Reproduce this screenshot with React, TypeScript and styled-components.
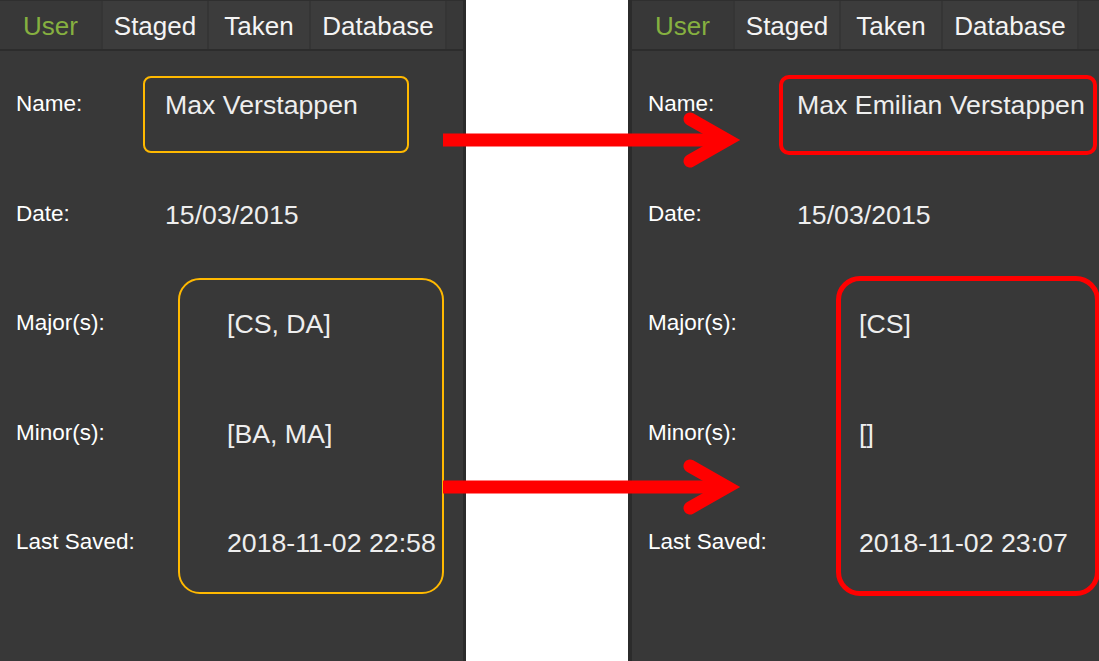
import React from "react";
import styled, { createGlobalStyle } from "styled-components";

const Global = createGlobalStyle`
  html, body { margin: 0; padding: 0; background: #ffffff; }
  body { font-family: "Liberation Sans", Arial, sans-serif; }
`;

const Page = styled.div`
  position: relative;
  width: 1099px;
  height: 661px;
  display: flex;
  justify-content: space-between;
  overflow: hidden;
  background: #ffffff;
`;

const Panel = styled.div<{ $w: number; $side: "left" | "right" }>`
  position: relative;
  width: ${(p) => p.$w}px;
  height: 661px;
  box-sizing: border-box;
  background: #383838;
  display: flex;
  flex-direction: column;
  ${(p) =>
    p.$side === "left"
      ? "border-right: 3px solid #2b2b2b;"
      : "border-left: 4px solid #2b2b2b;"}
`;

const TabBar = styled.div`
  display: flex;
  height: 48px;
  border-top: 1px solid #2f2f2f;
  border-bottom: 2px solid #2c2c2c;
  box-sizing: content-box;
`;

const Tab = styled.div<{ $w: number; $active?: boolean }>`
  width: ${(p) => p.$w}px;
  display: flex;
  align-items: center;
  justify-content: center;
  padding-top: 3px;
  font-size: 26px;
  color: ${(p) => (p.$active ? "#86b040" : "#f4f4f4")};
  background: ${(p) => (p.$active ? "#383838" : "#3c3c3c")};
  border-right: 2px solid #353535;
  box-sizing: border-box;
`;

const Rows = styled.div`
  display: grid;
  grid-template-columns: 149px 1fr;
  grid-auto-rows: 109.5px;
  padding-left: 16px;
`;

const Label = styled.div`
  display: flex;
  align-items: center;
  font-size: 22.5px;
  color: #ffffff;
  margin-top: -3px;
`;

const Value = styled.div<{ $indent: number }>`
  display: flex;
  align-items: center;
  padding-left: ${(p) => p.$indent}px;
  font-size: 26.7px;
  color: #eeeeee;
  white-space: nowrap;
`;

const Highlight = styled.div<{
  $x: number;
  $y: number;
  $w: number;
  $h: number;
  $color: string;
  $bw: number;
  $r: number;
}>`
  position: absolute;
  left: ${(p) => p.$x}px;
  top: ${(p) => p.$y}px;
  width: ${(p) => p.$w}px;
  height: ${(p) => p.$h}px;
  box-sizing: border-box;
  border: ${(p) => p.$bw}px solid ${(p) => p.$color};
  border-radius: ${(p) => p.$r}px;
  pointer-events: none;
`;

const Overlay = styled.svg`
  position: absolute;
  left: 0;
  top: 0;
  pointer-events: none;
`;

type Row = { label: string; value: string; indent: number };

const tabs = [
  { name: "User", w: 103, active: true },
  { name: "Staged", w: 106 },
  { name: "Taken", w: 102 },
  { name: "Database", w: 136 },
];

function UserPanel({
  side,
  width,
  rows,
  children,
}: {
  side: "left" | "right";
  width: number;
  rows: Row[];
  children?: React.ReactNode;
}) {
  return (
    <Panel $w={width} $side={side}>
      <TabBar>
        {tabs.map((t) => (
          <Tab key={t.name} $w={t.w} $active={t.active}>
            {t.name}
          </Tab>
        ))}
      </TabBar>
      <Rows>
        {rows.map((r) => (
          <React.Fragment key={r.label}>
            <Label>{r.label}</Label>
            <Value $indent={r.indent}>{r.value}</Value>
          </React.Fragment>
        ))}
      </Rows>
      {children}
    </Panel>
  );
}

function Arrow({ y }: { y: number }) {
  return (
    <g stroke="#ff0000" strokeWidth={13} fill="none">
      <line x1={443} y1={y} x2={726} y2={y} strokeLinecap="butt" />
      <polyline
        points={`690,${y - 21} 727,${y} 690,${y + 21}`}
        strokeLinecap="round"
        strokeLinejoin="miter"
        strokeMiterlimit={6}
      />
    </g>
  );
}

export default function App() {
  const before: Row[] = [
    { label: "Name:", value: "Max Verstappen", indent: 0 },
    { label: "Date:", value: "15/03/2015", indent: 0 },
    { label: "Major(s):", value: "[CS, DA]", indent: 62 },
    { label: "Minor(s):", value: "[BA, MA]", indent: 62 },
    { label: "Last Saved:", value: "2018-11-02 22:58", indent: 62 },
  ];
  const after: Row[] = [
    { label: "Name:", value: "Max Emilian Verstappen", indent: 0 },
    { label: "Date:", value: "15/03/2015", indent: 0 },
    { label: "Major(s):", value: "[CS]", indent: 62 },
    { label: "Minor(s):", value: "[]", indent: 62 },
    { label: "Last Saved:", value: "2018-11-02 23:07", indent: 62 },
  ];
  return (
    <>
      <Global />
      <Page>
        <UserPanel side="left" width={466} rows={before}>
          <Highlight $x={143} $y={76} $w={266} $h={77} $color="#ffb900" $bw={2} $r={8} />
          <Highlight $x={178} $y={278} $w={266} $h={316} $color="#ffb900" $bw={2} $r={22} />
        </UserPanel>
        <UserPanel side="right" width={471} rows={after}>
          <Highlight $x={147} $y={75} $w={318} $h={80} $color="#ff0000" $bw={4} $r={10} />
          <Highlight $x={204} $y={276} $w={264} $h={320} $color="#ff0000" $bw={5} $r={24} />
        </UserPanel>
        <Overlay width={1099} height={661} viewBox="0 0 1099 661">
          <Arrow y={140} />
          <Arrow y={487} />
        </Overlay>
      </Page>
    </>
  );
}
